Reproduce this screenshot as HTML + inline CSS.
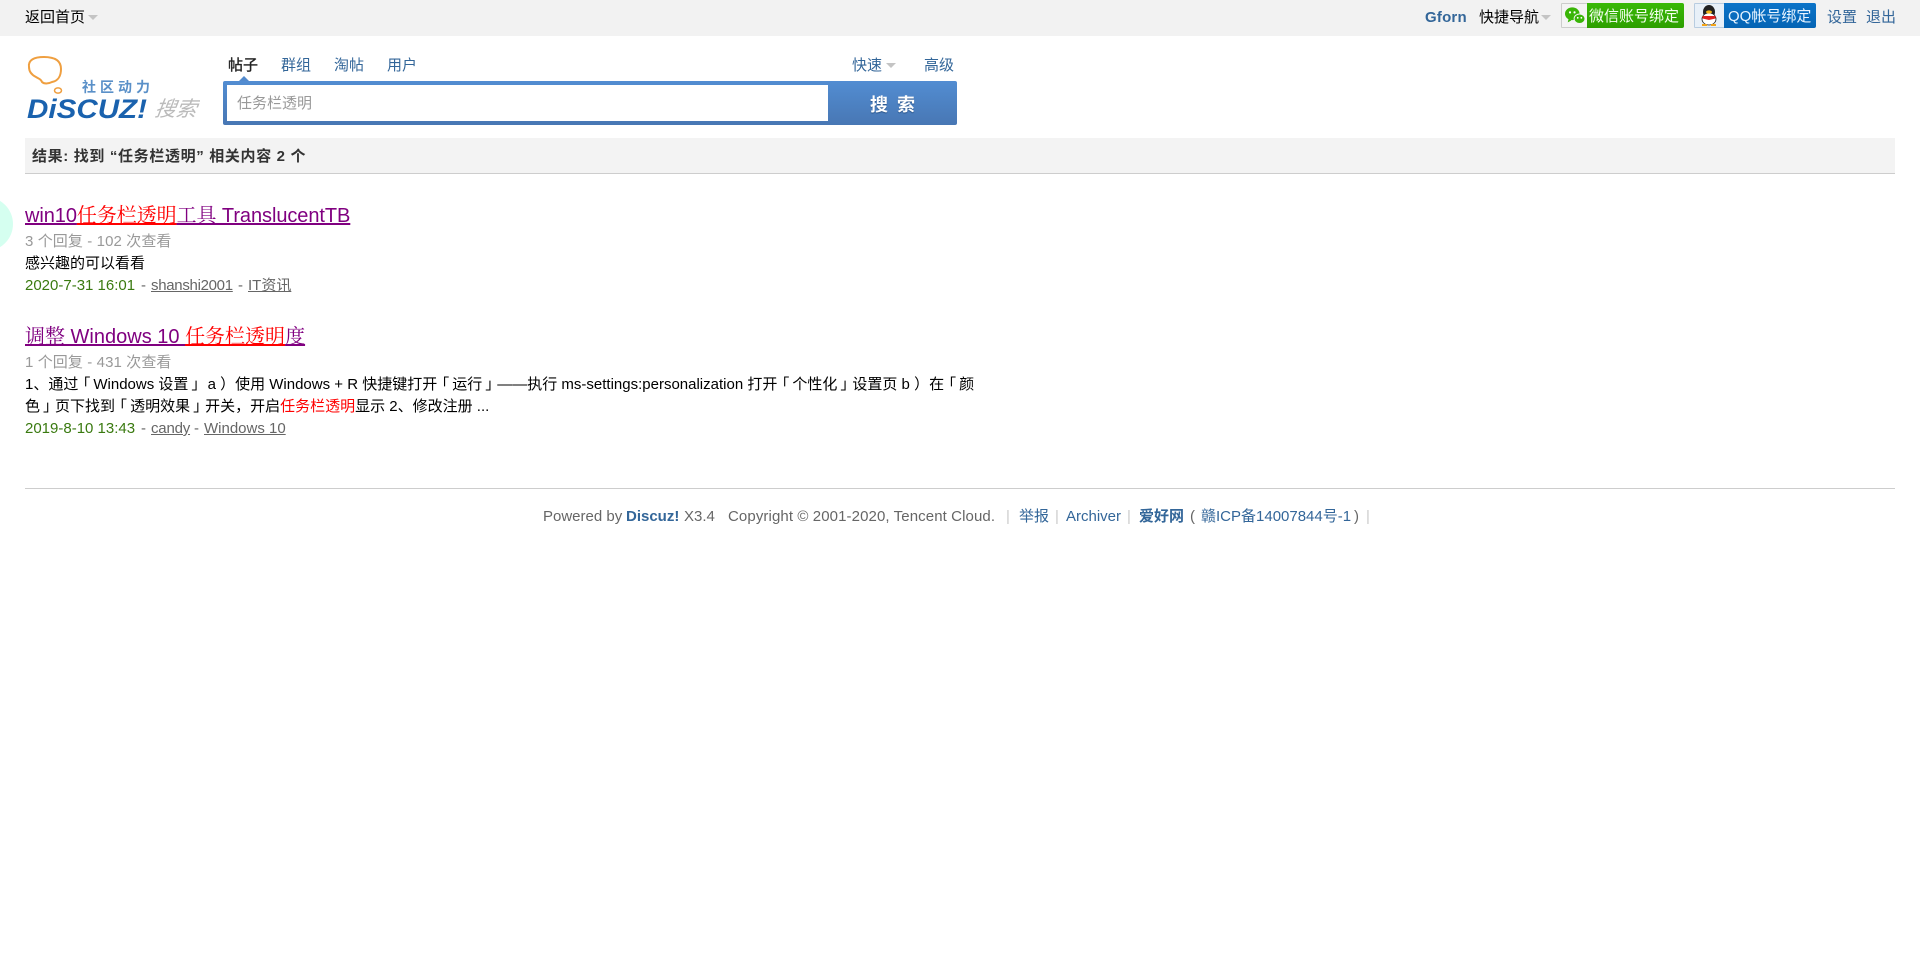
<!DOCTYPE html>
<html lang="zh-CN">
<head>
<meta charset="utf-8">
<title>任务栏透明 - 搜索</title>
<style>
html,body{margin:0;padding:0;background:#fff;width:1920px;height:961px;overflow:hidden}
body{position:relative;font:15px/18px "Liberation Sans","Noto Sans CJK SC",sans-serif;color:#000}
.t{position:absolute;white-space:nowrap;line-height:18px}
a{color:inherit;text-decoration:none}
.b{color:#369}
.arr{position:absolute;width:0;height:0;border:5px solid transparent;border-top-color:#c4c4c4;border-bottom:0}
.title{font-family:"Liberation Sans","Noto Serif CJK SC",serif;font-size:20px;line-height:24px;color:#800080;text-decoration:underline;text-decoration-thickness:2px;text-underline-offset:1px;text-decoration-skip-ink:none}
.hl{color:#f00}
.title .hl{text-decoration:underline;text-decoration-color:#f00;text-decoration-thickness:2px;text-underline-offset:1px;text-decoration-skip-ink:none}
.g{color:#999;letter-spacing:.1px}
.d{color:#3a7a10}
.u{color:#666;text-decoration:underline}
.f{color:#666}
.sep{color:#ccc}
.ql{position:relative;left:-3px}
.qr{position:relative;left:3px}
</style>
</head>
<body>
<div style="position:absolute;left:0;top:0;width:1920px;height:36px;background:#f2f2f2"></div>
<div style="position:absolute;left:-41px;top:197px;width:54px;height:54px;border-radius:50%;background:#d5fff0"></div>

<span class="t" style="left:25px;top:9px">返回首页</span>
<i class="arr" style="left:88px;top:15px"></i>

<a class="t" style="left:1425px;top:9px;font-weight:bold;color:#369;letter-spacing:.2px">Gforn</a>
<span class="t" style="left:1479px;top:9px">快捷导航</span>
<i class="arr" style="left:1541px;top:15px"></i>

<div style="position:absolute;left:1561px;top:3px;width:123px;height:25px;border-radius:2px;overflow:hidden;background:linear-gradient(#39b907,#2d9f00)">
  <div style="position:absolute;left:0;top:0;width:25px;height:23px;background:#f4f4f4;border:1px solid #ccc;border-right:0"></div>
  <svg style="position:absolute;left:3px;top:3px" width="22" height="20" viewBox="0 0 24 22">
    <ellipse cx="9" cy="8.5" rx="8" ry="7" fill="#39b507"/>
    <path d="M5 14l-1 4 4-2z" fill="#39b507"/>
    <ellipse cx="17" cy="14" rx="6" ry="5.2" fill="#39b507" stroke="#f4f4f4"/>
    <circle cx="6.5" cy="7" r="1.2" fill="#fff"/><circle cx="11.5" cy="7" r="1.2" fill="#fff"/>
    <circle cx="15" cy="13" r="1" fill="#fff"/><circle cx="19" cy="13" r="1" fill="#fff"/>
  </svg>
  <span class="t" style="left:28px;top:5px;color:#f4fff0">微信账号绑定</span>
</div>

<div style="position:absolute;left:1694px;top:3px;width:122px;height:25px;border-radius:2px;overflow:hidden;background:linear-gradient(#0c74c8,#0564b4)">
  <div style="position:absolute;left:0;top:0;width:29px;height:23px;background:#e8f0f8;border:1px solid #b8cce0;border-right:0"></div>
  <svg style="position:absolute;left:5px;top:1px" width="20" height="23" viewBox="0 0 20 23">
    <ellipse cx="10" cy="8" rx="6" ry="7" fill="#222"/>
    <ellipse cx="10" cy="15" rx="7" ry="6" fill="#fff" stroke="#222" stroke-width=".8"/>
    <path d="M3.5 12h13v2.5l-6.5 1.5-6.5-1.5z" fill="#d22"/>
    <ellipse cx="10" cy="8" rx="3" ry="1.6" fill="#f2b418"/>
    <path d="M3 20h5v2H3zM12 20h5v2h-5z" fill="#f2a418"/>
  </svg>
  <span class="t" style="left:34px;top:5px;color:#e8f4ff">QQ帐号绑定</span>
</div>

<a class="t b" style="left:1827px;top:9px">设置</a>
<a class="t b" style="left:1866px;top:9px">退出</a>

<svg style="position:absolute;left:25px;top:52px" width="175" height="72" viewBox="0 0 175 72">
  <path d="M4 15C3 8 9 5 19 5c11 0 17 4 17 12 0 7-3 12-9 13-4 2-8 2-10 0-1-3-3-3-6-5C7 23 4 20 4 15z" fill="#fff" stroke="#ef9f40" stroke-width="2"/>
  <ellipse cx="33" cy="38.5" rx="3.5" ry="2.6" fill="#fff" stroke="#ef9f40" stroke-width="1.5"/>
  <text x="57" y="40" font-family="'Liberation Sans','Noto Sans CJK SC',sans-serif" font-size="14" font-weight="bold" fill="#5a90c8" letter-spacing="4">社区动力</text>
  <text x="2" y="66" font-family="'Liberation Sans',sans-serif" font-size="27" font-weight="bold" font-style="italic" fill="#1a62ae" textLength="120" lengthAdjust="spacingAndGlyphs">DiSCUZ!</text>
  <text x="129" y="64" font-family="'Liberation Sans','Noto Sans CJK SC',sans-serif" font-size="21" font-style="italic" fill="#bbb" transform="skewX(-8) translate(9 0)">搜索</text>
</svg>

<span class="t" style="left:228px;top:57px;color:#222;-webkit-text-stroke:.35px #222">帖子</span>
<a class="t b" style="left:281px;top:57px">群组</a>
<a class="t b" style="left:334px;top:57px">淘帖</a>
<a class="t b" style="left:387px;top:57px">用户</a>
<a class="t b" style="left:852px;top:57px">快速</a>
<i class="arr" style="left:886px;top:63px"></i>
<a class="t b" style="left:924px;top:57px">高级</a>

<div style="position:absolute;left:239px;top:76px;width:0;height:0;border:5px solid transparent;border-bottom-color:#5289cc;border-top:0"></div>
<div style="position:absolute;left:223px;top:81px;width:734px;height:44px;border-radius:2px;background:linear-gradient(#528dd2,#4877b4)"></div>
<div style="position:absolute;left:227px;top:85px;width:601px;height:36px;background:#fff"></div>
<span class="t" style="left:237px;top:95px;color:#999">任务栏透明</span>
<span class="t" style="left:870px;top:95px;color:#fff;font-weight:bold;font-size:18px;line-height:20px;letter-spacing:2px;text-shadow:0 1px 1px #2a5488">搜 索</span>

<div style="position:absolute;left:25px;top:138px;width:1870px;height:35px;background:#f3f3f3;border-bottom:1px solid #cdcdcd"></div>
<span class="t" style="left:32px;top:148px;font-weight:bold;color:#333;letter-spacing:.65px">结果: 找到 “任务栏透明” 相关内容 2 个</span>

<a class="t title" style="left:25px;top:204px;letter-spacing:-.07px">win10<span class="hl">任务栏透明</span>工具 TranslucentTB</a>
<span class="t g" style="left:25px;top:233px">3 个回复 - 102 次查看</span>
<span class="t" style="left:25px;top:255px">感兴趣的可以看看</span>
<span class="t d" style="left:25px;top:277px">2020-7-31 16:01</span>
<span class="t f" style="left:141px;top:277px">-</span>
<a class="t u" style="left:151px;top:277px;letter-spacing:-.3px">shanshi2001</a>
<span class="t f" style="left:238px;top:277px">-</span>
<a class="t u" style="left:248px;top:277px">IT资讯</a>

<a class="t title" style="left:25px;top:325px">调整 Windows 10 <span class="hl">任务栏透明</span>度</a>
<span class="t g" style="left:25px;top:354px">1 个回复 - 431 次查看</span>
<span class="t" style="left:25px;top:376px">1、通过<span class="ql">「</span>Windows 设置<span class="qr">」</span> a ）使用 Windows + R 快捷键打开<span class="ql">「</span>运行<span class="qr">」</span>——执行 ms-settings:personalization 打开<span class="ql">「</span>个性化<span class="qr">」</span>设置页 b ）在<span class="ql">「</span>颜</span>
<span class="t" style="left:25px;top:398px">色<span class="qr">」</span>页下找到<span class="ql">「</span>透明效果<span class="qr">」</span>开关，开启<span class="hl">任务栏透明</span>显示 2、修改注册 ...</span>
<span class="t d" style="left:25px;top:420px">2019-8-10 13:43</span>
<span class="t f" style="left:141px;top:420px">-</span>
<a class="t u" style="left:151px;top:420px;letter-spacing:-.2px">candy</a>
<span class="t f" style="left:194px;top:420px">-</span>
<a class="t u" style="left:204px;top:420px">Windows 10</a>

<div style="position:absolute;left:25px;top:488px;width:1870px;height:1px;background:#cdcdcd"></div>

<span class="t f" style="left:543px;top:508px">Powered by</span>
<a class="t b" style="left:626px;top:508px;font-weight:bold">Discuz!</a>
<span class="t f" style="left:684px;top:508px">X3.4</span>
<span class="t f" style="left:728px;top:508px;letter-spacing:.1px">Copyright © 2001-2020, Tencent Cloud.</span>
<span class="t sep" style="left:1006px;top:508px">|</span>
<a class="t b" style="left:1019px;top:508px">举报</a>
<span class="t sep" style="left:1055px;top:508px">|</span>
<a class="t b" style="left:1066px;top:508px">Archiver</a>
<span class="t sep" style="left:1127px;top:508px">|</span>
<a class="t b" style="left:1139px;top:508px;font-weight:bold">爱好网</a>
<span class="t f" style="left:1190px;top:508px">(</span>
<a class="t b" style="left:1201px;top:508px">赣ICP备14007844号-1</a>
<span class="t f" style="left:1354px;top:508px">)</span>
<span class="t sep" style="left:1366px;top:508px">|</span>
</body>
</html>
